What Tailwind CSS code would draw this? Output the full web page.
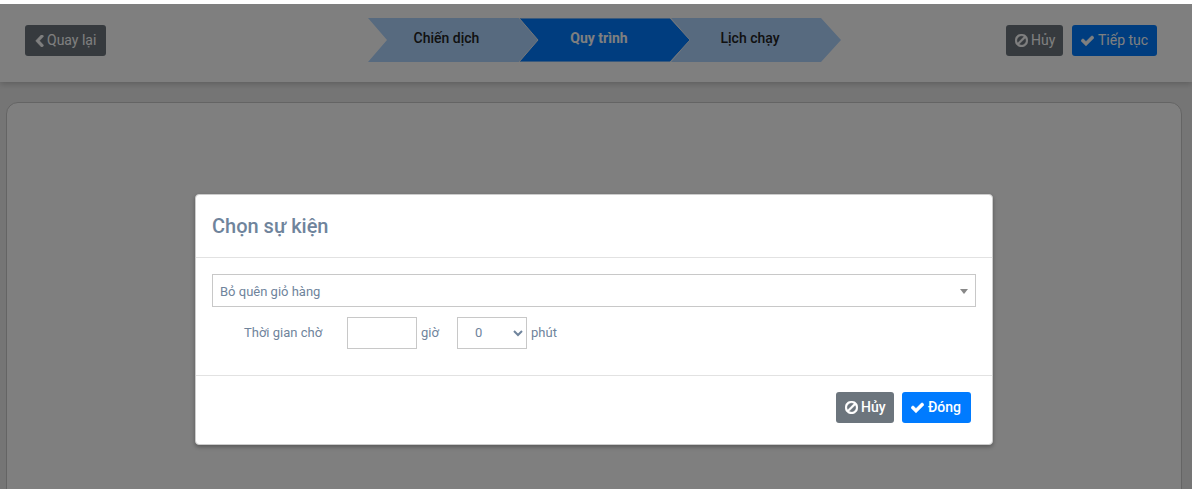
<!DOCTYPE html>
<html lang="vi">
<head>
    <meta charset="UTF-8">
    <meta name="viewport" content="width=device-width, initial-scale=1.0">
    <title>Chọn sự kiện</title>
    <script src="https://cdn.jsdelivr.net/npm/@tailwindcss/browser@4"></script>
</head>
<body class="bg-white font-['Roboto',sans-serif] overflow-hidden">
    <div class="h-[4px] bg-white"></div>
    <div class="relative h-[485px] overflow-hidden bg-[#ebebeb]">
        <!-- Top bar -->
        <div class="relative z-10 flex h-[78px] items-start bg-white pl-[25px] pr-[35px] shadow-[0_2px_6px_rgba(0,0,0,0.2)]">
            <button class="mt-[21px] flex h-[31px] w-[81px] items-center gap-[3px] rounded-[3px] bg-[#6c757d] pl-[10px] text-[14px] text-white">
                <svg class="h-[12px] w-[9px]" viewBox="300 100 1200 1500" fill="currentColor" stroke="currentColor" stroke-width="60" preserveAspectRatio="none"><path d="M1427 301l-531 531 531 531q19 19 19 45t-19 45l-166 166q-19 19-45 19t-45-19l-742-742q-19-19-19-45t19-45l742-742q19-19 45-19t45 19l166 166q19 19 19 45t-19 45z"/></svg>
                Quay lại
            </button>

            <div class="ml-[262px] mt-[14px] flex">
                <div class="relative flex h-[44px] w-[172px] items-center justify-center pb-[3px] pr-[15px] text-[14px] font-medium text-[#222]">
                    <svg class="absolute inset-0" width="172" height="44" viewBox="0 0 172 44"><polygon points="0,0 151,0 171,22 151,44 0,44 19,22" fill="#aed4ff"/></svg>
                    <span class="relative">Chiến dịch</span>
                </div>
                <div class="relative -ml-[21px] flex h-[44px] w-[172px] items-center justify-center pb-[3px] pr-[12px] text-[14px] font-bold text-white">
                    <svg class="absolute inset-0" width="172" height="44" viewBox="0 0 172 44"><polygon points="0,0 151,0 171,22 151,44 0,44 19,22" fill="#007bff" stroke="#e8eef5" stroke-width="1"/></svg>
                    <span class="relative">Quy trình</span>
                </div>
                <div class="relative -ml-[21px] flex h-[44px] w-[172px] items-center justify-center pb-[3px] pr-[12px] text-[14px] font-medium text-[#222]">
                    <svg class="absolute inset-0" width="172" height="44" viewBox="0 0 172 44"><polygon points="1,0 151,0 171,22 151,44 1,44 20,22" fill="#aed4ff"/></svg>
                    <span class="relative">Lịch chạy</span>
                </div>
            </div>

            <div class="ml-auto mt-[21px] flex gap-[9px]">
                <button class="flex h-[31px] w-[57px] items-center gap-[3px] rounded-[3px] bg-[#6c757d] pl-[9px] text-[14px] text-white">
                    <svg class="h-[13px] w-[13px]" viewBox="128 128 1536 1536" fill="currentColor" stroke="currentColor" stroke-width="50"><path d="M1440 893q0-161-87-295l-754 753q137 89 297 89 111 0 211.5-43.5t173.5-116.5 116-174.5 43-212.5zm-999 299l755-754q-135-91-300-91-148 0-273 73t-198 199-73 274q0 162 89 299zm1223-299q0 157-61 300t-163.5 246-245 164-298.5 61-298.5-61-245-164-163.5-246-61-300 61-299.5 163.5-245.5 245-164 298.5-61 298.5 61 245 164 163.5 245.5 61 299.5z"/></svg>
                    Hủy
                </button>
                <button class="flex h-[31px] w-[85px] items-center gap-[4px] rounded-[3px] bg-[#007bff] pl-[9px] text-[14px] text-white">
                    <svg class="h-[13px] w-[13px]" viewBox="121 250 1550 1300" fill="currentColor" stroke="currentColor" stroke-width="50"><path d="M1671 566q0 40-28 68l-724 724-136 136q-28 28-68 28t-68-28l-136-136-362-362q-28-28-28-68t28-68l136-136q28-28 68-28t68 28l294 295 656-657q28-28 68-28t68 28l136 136q28 28 28 68z"/></svg>
                    Tiếp tục
                </button>
            </div>
        </div>

        <!-- Page card -->
        <div class="ml-[6px] mr-[10px] mt-[20px] h-[500px] rounded-[12px] border border-[#c8c8c8] bg-white"></div>

        <!-- Modal -->
        <div class="absolute inset-0 z-20 flex justify-center bg-black/50 pr-[4px] pt-[190px]">
            <div class="h-[251px] w-[798px] rounded-[4px] border border-[#ccc] bg-white shadow-[0_2px_4px_rgba(0,0,0,0.3)]">
                <div class="flex h-[63px] items-center border-b border-[#e2e2e2] px-[16px]">
                    <h4 class="text-[20px] font-medium text-[#6f849c]">Chọn sự kiện</h4>
                </div>
                <div class="h-[117px] px-[16px] pt-[16px] text-[13px] text-[#6f849c]">
                    <div class="flex h-[33px] items-center border border-[#c8c8c8] pl-[7px] pr-[7px]">
                        <span class="mt-[3px] flex-1">Bỏ quên giỏ hàng</span>
                        <span class="mt-[2px] border-x-[4px] border-t-[5px] border-x-transparent border-t-[#888]"></span>
                    </div>
                    <div class="mt-[10px] flex h-[32px] items-center">
                        <label class="w-[135px] whitespace-nowrap pl-[32px]">Thời gian chờ</label>
                        <input type="text" class="h-[32px] w-[70px] border border-[#c8c8c8] bg-white outline-none">
                        <span class="ml-[4px] w-[36px]">giờ</span>
                        <select class="h-[32px] w-[70px] border border-[#c8c8c8] bg-white pb-[2px] pl-[13px] outline-none">
                            <option>0</option>
                        </select>
                        <span class="ml-[4px]">phút</span>
                    </div>
                </div>
                <div class="flex h-[68px] items-start justify-end gap-[8px] border-t border-[#e2e2e2] pr-[21px] pt-[16px]">
                    <button class="flex h-[31px] w-[58px] items-center gap-[3px] rounded-[3px] bg-[#6c757d] pl-[9px] text-[14px] font-medium text-white">
                        <svg class="h-[13px] w-[13px]" viewBox="128 128 1536 1536" fill="currentColor" stroke="currentColor" stroke-width="50"><path d="M1440 893q0-161-87-295l-754 753q137 89 297 89 111 0 211.5-43.5t173.5-116.5 116-174.5 43-212.5zm-999 299l755-754q-135-91-300-91-148 0-273 73t-198 199-73 274q0 162 89 299zm1223-299q0 157-61 300t-163.5 246-245 164-298.5 61-298.5-61-245-164-163.5-246-61-300 61-299.5 163.5-245.5 245-164 298.5-61 298.5 61 245 164 163.5 245.5 61 299.5z"/></svg>
                        Hủy
                    </button>
                    <button class="flex h-[31px] w-[69px] items-center gap-[4px] rounded-[3px] bg-[#007bff] pl-[9px] text-[14px] font-medium text-white">
                        <svg class="h-[13px] w-[13px]" viewBox="121 250 1550 1300" fill="currentColor" stroke="currentColor" stroke-width="50"><path d="M1671 566q0 40-28 68l-724 724-136 136q-28 28-68 28t-68-28l-136-136-362-362q-28-28-28-68t28-68l136-136q28-28 68-28t68 28l294 295 656-657q28-28 68-28t68 28l136 136q28 28 28 68z"/></svg>
                        Đóng
                    </button>
                </div>
            </div>
        </div>
    </div>
</body>
</html>
